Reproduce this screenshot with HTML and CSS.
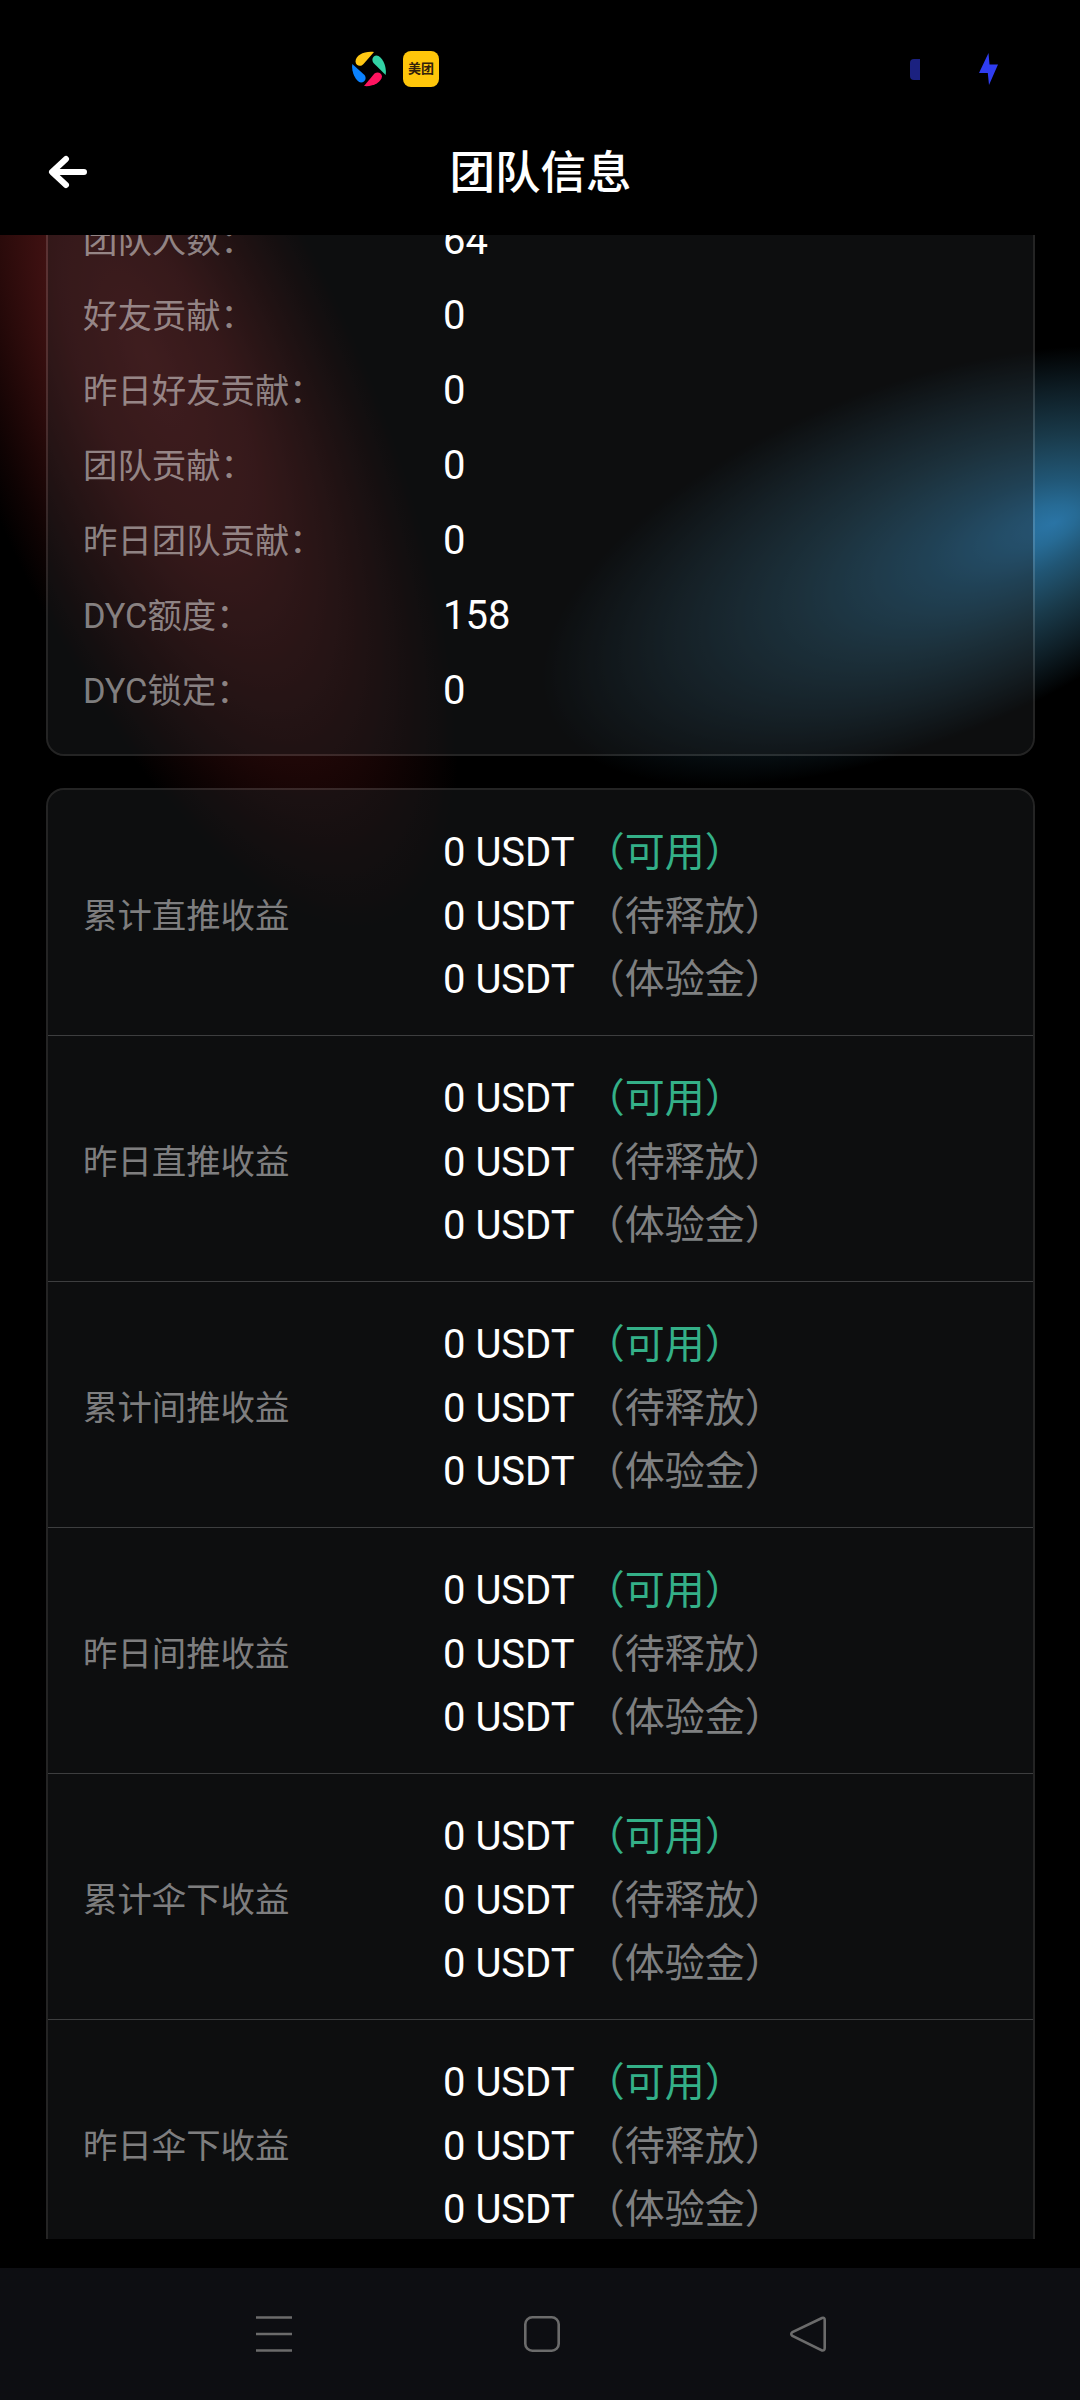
FILE: index.html
```html
<!DOCTYPE html>
<html lang="zh-CN">
<head>
<meta charset="utf-8">
<title>团队信息</title>
<link rel="stylesheet" href="styles.css">
</head>
<body>
<div class="screen">
  <div class="status">
    <svg class="pinwheel" viewBox="0 0 36 36">
      <path fill="#ffc814" d="M23 1C13 0 5 4 4.500 10.500C5 15.500 10 16 12.500 13Z"/>
      <path fill="#32d2a5" d="M34.700 24C36 15 31 5 25.500 4.500C21 5 20.500 9.500 22.500 12Z"/>
      <path fill="#ff1460" d="M13 35C22 36 30.500 31 31 25.500C30.500 21 26 20.500 23.500 22.500Z"/>
      <path fill="#0a82ff" d="M1.300 13C0 21 5 31 10 31.500C15 31 15.500 26.500 13.500 24Z"/>
    </svg>
    <span class="meituan">美团</span>
    <span class="battery"></span>
    <svg class="bolt" viewBox="0 0 20 32"><path fill="#2f3df0" d="M9.500 0L0 20H8.800L10 32L19 11.500H10.500Z"/></svg>
  </div>
  <header class="header">
    <svg class="back" viewBox="0 0 40 36"><path d="M18 4L4 17L18 30M5 17H36" fill="none" stroke="#fff" stroke-width="6" stroke-linecap="round" stroke-linejoin="round"/></svg>
    <h1 class="title">团队信息</h1>
    <span class="back"></span>
  </header>
  <main class="content">
    <svg class="glow" viewBox="0 235 1080 2004">
      <defs>
        <radialGradient id="red" gradientUnits="userSpaceOnUse" cx="0" cy="0" r="1" fx="-.15" fy="0">
          <stop offset="0" stop-color="#541a1b"/>
          <stop offset=".35" stop-color="#501617" stop-opacity=".85"/>
          <stop offset=".6" stop-color="#501414" stop-opacity=".52"/>
          <stop offset=".85" stop-color="#501010" stop-opacity=".18"/>
          <stop offset="1" stop-color="#501010" stop-opacity="0"/>
        </radialGradient>
        <radialGradient id="blue" gradientUnits="userSpaceOnUse" cx="0" cy="0" r="1" fx=".4" fy=".09">
          <stop offset="0" stop-color="#2a74a5"/>
          <stop offset=".1" stop-color="#2a74a2" stop-opacity=".92"/>
          <stop offset=".25" stop-color="#2c749e" stop-opacity=".74"/>
          <stop offset=".5" stop-color="#34789a" stop-opacity=".48"/>
          <stop offset=".75" stop-color="#387898" stop-opacity=".25"/>
          <stop offset="1" stop-color="#387898" stop-opacity="0"/>
        </radialGradient>
      </defs>
      <circle r="1" fill="url(#red)" transform="translate(178 430) rotate(67) scale(540 200)"/>
      <circle r="1" fill="url(#blue)" transform="translate(905 566) rotate(-22) scale(388 178)"/>
    </svg>
    <section class="card summary">
      <div class="row"><span class="label">团队人数：</span><span class="value">64</span></div>
      <div class="row"><span class="label">好友贡献：</span><span class="value">0</span></div>
      <div class="row"><span class="label">昨日好友贡献：</span><span class="value">0</span></div>
      <div class="row"><span class="label">团队贡献：</span><span class="value">0</span></div>
      <div class="row"><span class="label">昨日团队贡献：</span><span class="value">0</span></div>
      <div class="row"><span class="label">DYC额度：</span><span class="value">158</span></div>
      <div class="row"><span class="label">DYC锁定：</span><span class="value">0</span></div>
    </section>
    <section class="card income">
      <div class="entry"><span class="label">累计直推收益</span><div class="amounts"><p>0 USDT <b class="free">（可用）</b></p><p>0 USDT <b>（待释放）</b></p><p>0 USDT <b>（体验金）</b></p></div></div>
      <div class="entry"><span class="label">昨日直推收益</span><div class="amounts"><p>0 USDT <b class="free">（可用）</b></p><p>0 USDT <b>（待释放）</b></p><p>0 USDT <b>（体验金）</b></p></div></div>
      <div class="entry"><span class="label">累计间推收益</span><div class="amounts"><p>0 USDT <b class="free">（可用）</b></p><p>0 USDT <b>（待释放）</b></p><p>0 USDT <b>（体验金）</b></p></div></div>
      <div class="entry"><span class="label">昨日间推收益</span><div class="amounts"><p>0 USDT <b class="free">（可用）</b></p><p>0 USDT <b>（待释放）</b></p><p>0 USDT <b>（体验金）</b></p></div></div>
      <div class="entry"><span class="label">累计伞下收益</span><div class="amounts"><p>0 USDT <b class="free">（可用）</b></p><p>0 USDT <b>（待释放）</b></p><p>0 USDT <b>（体验金）</b></p></div></div>
      <div class="entry"><span class="label">昨日伞下收益</span><div class="amounts"><p>0 USDT <b class="free">（可用）</b></p><p>0 USDT <b>（待释放）</b></p><p>0 USDT <b>（体验金）</b></p></div></div>
    </section>
  </main>
  <nav class="navbar">
    <svg viewBox="0 0 40 40"><path d="M2 3.500H38M2 20H38M2 36.500H38"/></svg>
    <svg viewBox="0 0 40 40"><rect x="4.300" y="3.300" width="33.400" height="33.400" rx="7"/></svg>
    <svg viewBox="0 0 40 40"><path d="M34 4L4.500 18Q2 20 4.500 22L34 36.500Q36.700 37 36.700 34V6Q36.700 3 34 4Z"/></svg>
  </nav>
</div>
</body>
</html>
```
FILE: styles.css
```css
* { box-sizing: border-box; }

body {
  margin: 0;
  background: #000;
  color: #fff;
  font-family: Roboto, "Noto Sans CJK SC", sans-serif;
}

.screen {
  display: flex;
  flex-direction: column;
  width: 1080px;
  height: 2400px;
  overflow: hidden;
}

.status {
  display: flex;
  flex: none;
  align-items: center;
  height: 110px;
  padding: 28px 81px 0 351px;
}

.pinwheel { width: 36px; height: 36px; }

.meituan {
  width: 36px;
  height: 36px;
  margin-left: 16px;
  border-radius: 8px;
  background: #ffc60a;
  color: #32200a;
  font-size: 13px;
  font-weight: 700;
  line-height: 36px;
  text-align: center;
}

.battery {
  width: 10px;
  height: 21px;
  margin-left: auto;
  border-radius: 4px 0 0 4px;
  background: #1b2180;
}

.bolt { width: 20px; height: 32px; margin-left: 59px; }

.header {
  display: flex;
  flex: none;
  align-items: center;
  justify-content: space-between;
  height: 125px;
  padding: 0 48px;
}

.back { width: 40px; height: 36px; }

.title {
  margin: 0;
  padding-top: 3px;
  padding-left: 1px;
  font-size: 45.5px;
  font-weight: 500;
  line-height: 60px;
}

.content {
  position: relative;
  display: flex;
  flex-direction: column;
  flex: none;
  gap: 32px;
  height: 2004px;
  padding: 0 45px 0 46px;
  overflow: hidden;
}

.glow {
  position: absolute;
  inset: 0;
  width: 1080px;
  height: 2004px;
}

.card {
  position: relative;
  flex: none;
  border: 2px solid rgba(255, 255, 255, .14);
  border-radius: 18px;
  background: rgba(32, 35, 38, .4);
  background-clip: padding-box;
}

.summary { margin-top: -34px; padding-bottom: 26px; }

.row, .entry {
  display: grid;
  grid-template-columns: 360px 1fr;
  align-items: center;
  padding-left: 35px;
}

.row { height: 75px; }

.label { color: rgba(255, 255, 255, .48); font-size: 34.4px; line-height: 50px; }

.value { font-size: 40px; line-height: 60px; }

.entry {
  height: 246px;
  padding-top: 7px;
  border-bottom: 1px solid rgba(255, 255, 255, .2);
}

.amounts {
  display: grid;
  gap: .5px;
}

.amounts p { margin: 0; font-size: 40px; line-height: 63px; }

.amounts b { margin-left: 1px; color: #7f8081; font-weight: 400; }

.amounts .free { color: #34b088; }

.navbar {
  display: flex;
  flex: none;
  justify-content: space-between;
  height: 132px;
  margin-top: 29px;
  padding: 46px 252px 0 254px;
  background: #0d0e12;
}

.navbar svg {
  width: 40px;
  height: 40px;
  fill: none;
  stroke: #6b6b6b;
  stroke-width: 2.6;
}
```
